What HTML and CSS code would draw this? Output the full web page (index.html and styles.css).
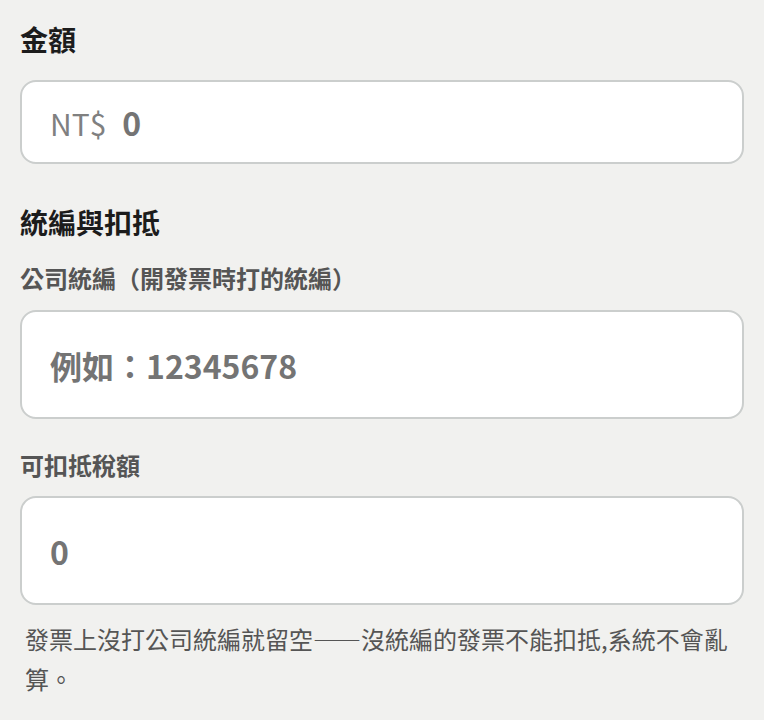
FILE: index.html
```html
<!DOCTYPE html>
<html lang="zh-Hant">
<head>
<meta charset="utf-8">
<link rel="stylesheet" href="styles.css">
</head>
<body>
<div class="form">
  <h2 class="section-title">金額</h2>
  <div class="field field-amount">
    <span class="prefix">NT$</span>
    <input class="field-input" type="text" placeholder="0">
  </div>

  <h2 class="section-title section-gap">統編與扣抵</h2>
  <label class="field-label">公司統編（開發票時打的統編）</label>
  <div class="field field-tall">
    <input class="field-input" type="text" placeholder="例如：12345678">
  </div>

  <label class="field-label label-gap">可扣抵稅額</label>
  <div class="field field-tall field-tax">
    <input class="field-input" type="text" placeholder="0">
  </div>

  <p class="hint">發票上沒打公司統編就留空——沒統編的發票不能扣抵,系統不會亂算。</p>
</div>
</body>
</html>
```

FILE: styles.css
```css
* { box-sizing: border-box; }

html, body {
  margin: 0;
  padding: 0;
  background: #f1f1ef;
}

body {
  font-family: "Noto Sans CJK TC", "Noto Sans", sans-serif;
  color: #1c1c1c;
}

.form {
  display: flex;
  flex-direction: column;
  padding: 21px 20px 0 20px;
}

.section-title {
  margin: 0;
  font-size: 28px;
  line-height: 36px;
  font-weight: 700;
  color: #1c1c1c;
}

.section-gap { margin-top: 40px; }

.field {
  display: flex;
  align-items: center;
  background: #ffffff;
  border: 2px solid #cbcecd;
  border-radius: 16px;
  padding: 0 26px 0 28px;
}

.field-amount {
  margin-top: 23px;
  height: 84px;
  gap: 16px;
}

.field-tall {
  height: 109px;
  margin-top: 16px;
}

.field-tax { margin-top: 15px; }

.prefix {
  font-size: 30px;
  color: #808080;
  font-weight: 400;
  font-family: "Noto Sans CJK TC", "Noto Sans", sans-serif;
  position: relative;
  top: 1px;
}

.field-input {
  flex: 1;
  min-width: 0;
  border: none;
  outline: none;
  background: transparent;
  padding: 0;
  font-family: "Noto Sans CJK TC", "Noto Sans", sans-serif;
  font-size: 32px;
  font-weight: 700;
  color: #444;
}

.field-input::placeholder {
  color: #747474;
  opacity: 1;
}

.field-label {
  display: block;
  margin-top: 22px;
  font-size: 24px;
  line-height: 32px;
  font-weight: 700;
  color: #555555;
}

.label-gap { margin-top: 30px; }

.hint {
  margin: 14px 0 0 0;
  padding: 0 10px 0 5px;
  font-size: 24px;
  line-height: 40px;
  font-weight: 400;
  color: #555555;
}
```
